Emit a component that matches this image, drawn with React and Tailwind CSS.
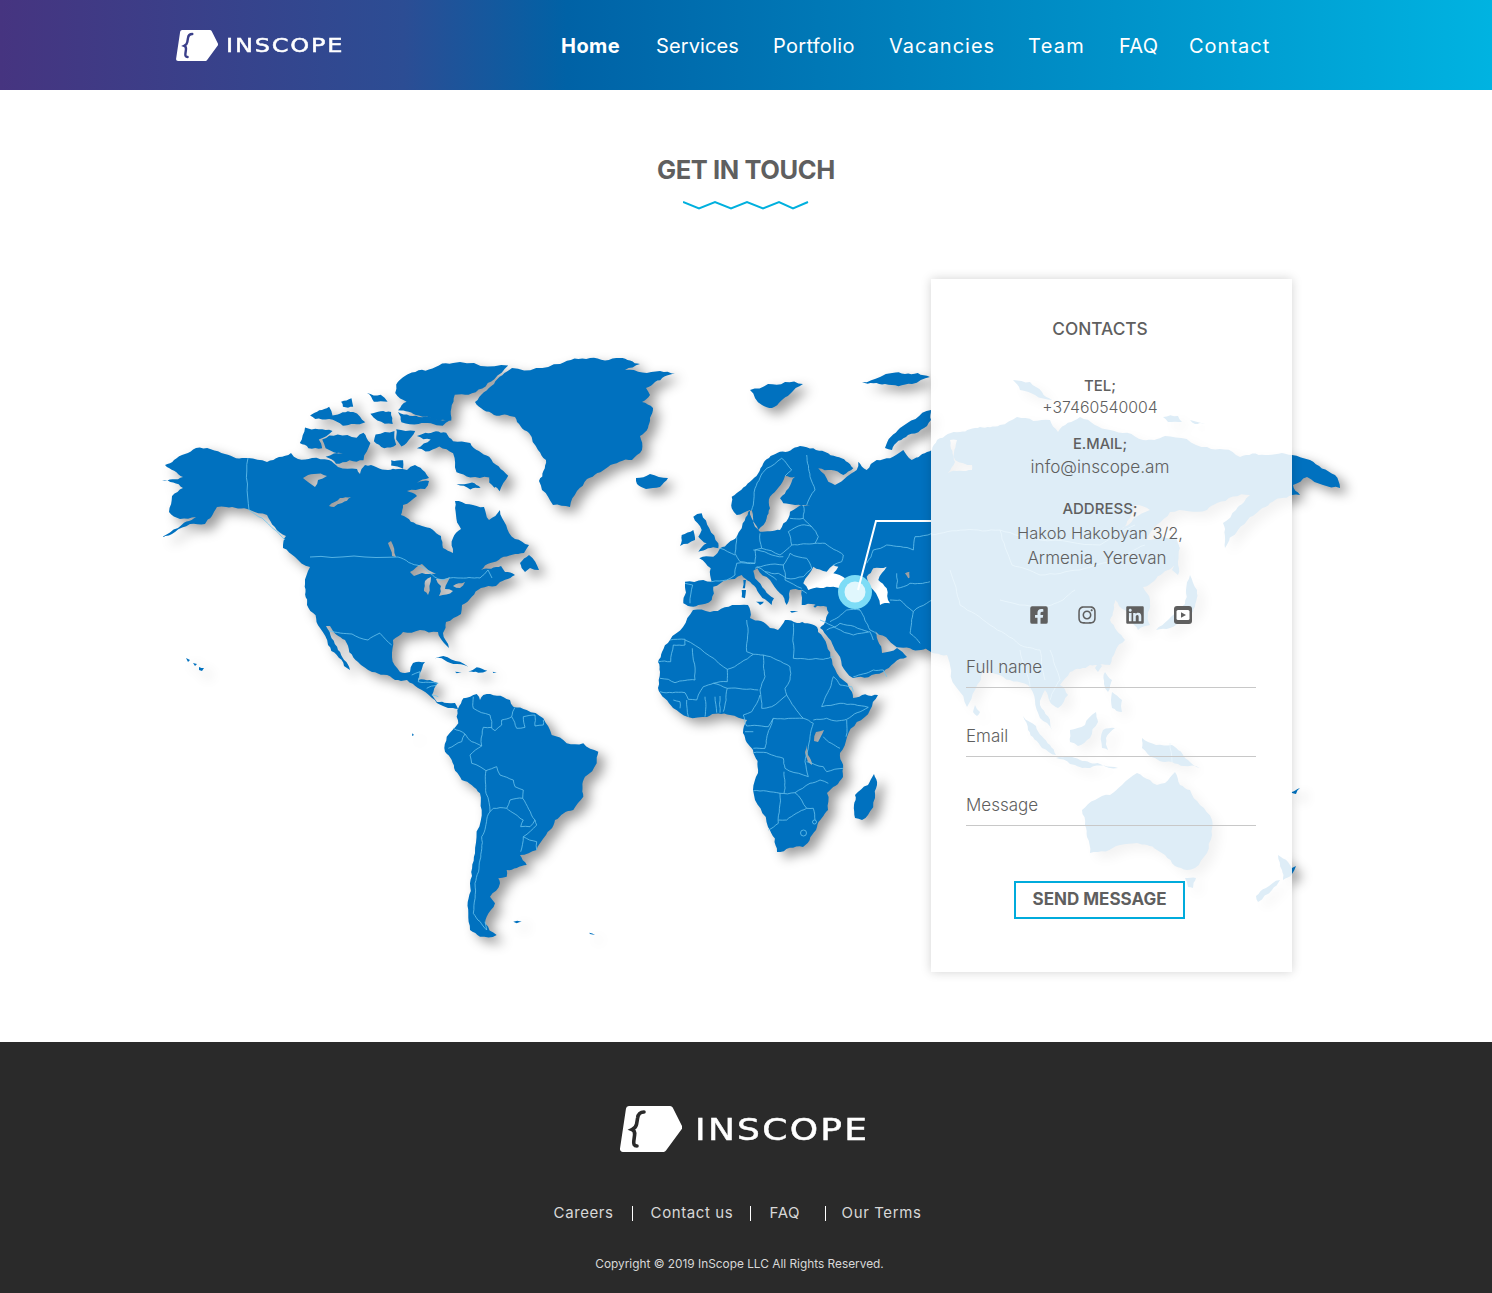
import React from "react";
import { FaFacebookSquare, FaInstagram, FaLinkedin } from "react-icons/fa";

const navLinks = [
  { label: "Home", cls: "font-bold w-[95px] tracking-[0.45px]" },
  { label: "Services", cls: "w-[117px] tracking-[0.1px]" },
  { label: "Portfolio", cls: "w-[116px] tracking-[0.3px]" },
  { label: "Vacancies", cls: "w-[140px] tracking-[1px]" },
  { label: "Team", cls: "w-[91px] tracking-[1.3px] -ml-[1px]" },
  { label: "FAQ", cls: "w-[70px] tracking-[0.3px]" },
  { label: "Contact", cls: "w-[82px] tracking-[1px]" },
];

// land shapes in page coordinates
const landPage = [
  // north america
  "M162,537 L178,528 L196,517 L180,519 L169,512 L172,496 L183,488 L162,481 L183,477 L165,465 L174,460 L196,448 L225,454 L248,458 L267,462 L279,457 L291,453 L298,459 L312,458 L329,460 L338,467 L357,469 L360,474 L365,465 L388,470 L398,469 L407,470 L415,465 L425,472 L429,478 L417,483 L429,481 L425,489 L407,491 L417,496 L403,505 L401,515 L422,526 L441,536 L443,548 L453,553 L453,538 L461,529 L456,515 L455,501 L484,507 L489,520 L500,510 L515,539 L529,545 L524,553 L501,558 L481,570 L501,566 L505,572 L515,575 L496,586 L481,588 L462,605 L461,614 L446,622 L443,633 L449,648 L444,643 L438,632 L420,630 L403,632 L393,640 L392,657 L400,672 L410,672 L413,663 L425,662 L420,673 L418,680 L430,680 L438,683 L432,695 L437,702 L447,703 L455,703 L458,709 L453,708 L448,708 L443,706 L432,698 L418,688 L407,680 L395,680 L372,672 L358,662 L345,640 L330,626 L326,626 L338,650 L350,670 L344,666 L328,645 L320,628 L307,605 L305,584 L310,567 L295,557 L283,548 L286,536 L267,515 L250,510 L226,507 L217,507 L205,524 L190,524 L175,532 Z M303,478 L314,474 L327,476 L318,480 L315,487 L308,482 Z M329,506 L340,498 L351,497 L342,503 L334,507 Z M388,543 L391,541 L396,557 L392,556 Z M410,572 L422,564 L436,574 L422,573 L414,576 Z M425,581 L431,577 L428,595 L424,591 Z M436,579 L450,577 L445,589 L453,591 L439,596 L441,586 Z M453,586 L465,582 L460,588 Z",
  "M520,563 L529,555 L539,570 L530,568 L525,572 Z",
  // greenland
  "M512,368 L560,364 L590,358 L620,358 L640,364 L625,370 L660,371 L675,374 L655,382 L646,388 L650,395 L642,402 L653,408 L650,418 L648,428 L640,436 L642,450 L632,460 L608,467 L587,479 L577,491 L570,507 L553,505 L542,490 L539,481 L546,460 L538,450 L529,433 L515,417 L494,415 L475,402 L494,384 Z",
  // asia, north coast then south coast
  "M915,462 L932,450 L937,440 L960,432 L980,427 L1000,425 L1017,417 L1050,420 L1058,432 L1080,417 L1110,430 L1143,440 L1165,436 L1207,447 L1240,457 L1265,455 L1292,455 L1310,460 L1335,475 L1340,488 L1323,485 L1307,477 L1293,485 L1300,495 L1292,495 L1270,503 L1250,517 L1238,530 L1225,548 L1223,523 L1236,510 L1250,495 L1217,503 L1207,510 L1170,512 L1147,540 L1163,537 L1177,537 L1178,560 L1163,573 L1143,587 L1150,600 L1150,625 L1138,630 L1125,610 L1115,600 L1110,620 L1125,640 L1110,665 L1090,665 L1070,672 L1060,685 L1068,695 L1058,708 L1050,702 L1045,690 L1040,705 L1052,730 L1040,718 L1035,700 L1028,685 L1000,675 L985,668 L975,690 L967,707 L950,665 L947,655 L925,648 L915,640 Z M950,440 L957,440 L955,460 L972,465 L972,470 L948,473 L955,462 Z M1135,505 L1150,510 L1120,530 L1130,518 Z",
  // arabia
  "M830,610 L870,625 L875,628 L882,653 L897,648 L907,657 L883,672 L853,678 L835,650 L820,628 Z",
  // africa
  "M658,662 L662,652 L670,640 L683,627 L693,610 L710,612 L740,605 L748,605 L750,618 L770,628 L778,630 L785,620 L797,623 L817,627 L818,632 L832,660 L852,692 L853,698 L878,695 L870,710 L847,737 L840,753 L843,777 L827,793 L828,810 L817,827 L803,847 L777,852 L768,827 L753,790 L758,773 L753,750 L743,733 L747,720 L730,715 L707,717 L688,717 L673,708 L658,688 L660,672 Z M816,732 L824,730 L818,742 L814,741 Z M806,745 L808,755 L812,765 L808,762 L805,752 Z",
  // europe bits, asia islands, pacific
  "M636,478 L650,474 L668,478 L660,487 L646,489 L637,484 Z",
  "M750,390 L768,384 L785,382 L803,384 L790,394 L772,408 L762,405 Z",
  "M862,382 L880,377 L905,374 L930,377 L912,384 L885,384 Z",
  "M885,448 L900,428 L931,410 L931,420 L908,435 L892,450 Z",
  "M1013,380 L1030,382 L1042,392 L1052,400 L1035,395 L1020,390 Z",
  "M1163,417 L1178,416 L1182,422 L1168,422 Z",
  "M1190,420 L1205,423 L1195,424 Z",
  "M1172,540 L1180,548 L1178,575 L1172,570 L1175,555 Z",
  "M1190,575 L1197,590 L1193,612 L1170,628 L1156,630 L1168,620 L1185,604 L1186,590 Z",
  "M1098,662 L1102,666 L1098,672 L1095,668 Z",
  "M1105,672 L1112,680 L1108,692 L1104,684 Z",
  "M1112,692 L1122,700 L1122,712 L1112,708 Z",
  "M975,705 L980,712 L977,716 L973,712 Z",
  "M1023,716 L1036,726 L1050,745 L1056,755 L1042,748 L1028,730 Z",
  "M1056,758 L1080,760 L1100,764 L1118,768 L1090,768 L1070,764 Z",
  "M1070,730 L1085,725 L1096,712 L1098,722 L1090,738 L1078,746 L1070,742 Z",
  "M1103,730 L1115,728 L1106,738 L1108,750 L1102,748 Z",
  "M1142,738 L1156,745 L1172,745 L1188,760 L1200,768 L1184,766 L1172,762 L1165,762 L1155,758 L1142,748 Z",
  "M1082,810 L1095,800 L1110,795 L1122,785 L1137,773 L1150,780 L1157,785 L1165,783 L1175,772 L1180,785 L1190,790 L1200,805 L1212,820 L1212,835 L1207,853 L1195,868 L1187,870 L1175,866 L1165,855 L1157,850 L1147,845 L1137,843 L1120,845 L1090,853 L1087,837 L1085,825 Z",
  "M1185,878 L1196,878 L1193,888 L1188,887 Z",
  "M1278,855 L1288,862 L1292,868 L1296,866 L1292,874 L1283,880 L1282,870 Z",
  "M1280,880 L1272,890 L1258,902 L1256,896 L1266,888 Z",
  "M1290,792 L1300,788 L1296,794 Z",
  "M855,795 L868,785 L874,774 L877,785 L875,798 L868,815 L862,820 L855,818 L854,805 Z",
  "M186,658 L190,660 L188,662 Z",
  "M193,663 L197,664 L195,666 Z",
  "M199,667 L204,668 L202,671 L199,670 Z",
];

// arctic canada, coordinates read at 2.9x from (150,350)
const landArctic = [
  "M715,100 L760,65 L800,60 L880,38 L1040,45 L1000,85 L925,130 L885,130 L875,170 L875,205 L780,190 L720,175 L745,150 L712,125 Z",
  "M775,250 L800,240 L860,240 L880,265 L930,270 L985,310 L1040,365 L1015,410 L1000,395 L985,370 L930,370 L890,355 L880,300 L840,280 L800,295 L775,285 L815,260 Z",
  "M435,270 L450,225 L530,235 L490,260 L500,285 L460,285 Z",
  "M500,260 L545,245 L600,255 L620,240 L640,270 L620,320 L540,330 L510,310 L560,300 L510,285 Z",
  "M655,245 L710,235 L715,275 L680,285 L650,265 Z",
  "M700,320 L735,320 L735,345 L700,335 Z",
  "M720,180 L790,195 L870,205 L850,220 L780,215 L730,210 Z",
  "M465,190 L520,165 L530,190 L590,180 L625,210 L560,220 L520,200 L480,200 Z",
  "M630,125 L670,130 L690,150 L650,150 Z",
  "M555,150 L585,140 L590,165 L560,165 Z",
  "M640,185 L700,180 L705,215 L660,205 Z",
  "M715,230 L770,235 L745,270 L730,280 L715,260 Z",
  "M890,390 L935,385 L960,400 L930,405 Z",
  "M985,370 L1015,390 L1000,400 L985,385 Z",
];

// europe and the near east, coordinates read at 3x from (670,440)
const landEurope = [
  "M40,490 L45,425 L100,420 L125,425 L122,385 L88,355 L130,350 L150,325 L200,290 L215,265 L218,250 L235,215 L245,210 L255,260 L270,275 L330,270 L355,235 L360,215 L400,195 L420,195 L375,195 L340,190 L330,175 L375,110 L345,108 L300,170 L300,205 L290,235 L265,270 L245,235 L240,210 L200,225 L185,205 L185,170 L240,125 L280,70 L330,35 L390,18 L430,25 L500,50 L550,85 L520,105 L445,85 L475,125 L495,135 L530,110 L560,90 L565,65 L590,90 L620,60 L660,55 L700,30 L725,60 L786,45 L786,625 L720,625 L680,622 L610,570 L600,575 L480,540 L470,500 L395,495 L395,450 L360,450 L350,495 L330,460 L300,420 L262,385 L250,392 L255,415 L285,450 L312,475 L305,495 L285,478 L240,425 L215,405 L170,420 L130,440 L125,480 L85,495 L70,500 Z M705,400 L720,395 L725,410 L715,415 Z",
  "M70,230 L95,220 L118,265 L145,310 L145,325 L85,335 L110,310 L85,290 L95,270 Z",
  "M35,285 L70,270 L75,300 L30,318 Z",
  "M220,420 L228,420 L225,445 L218,445 Z",
  "M215,450 L228,450 L225,475 L215,472 Z",
  "M258,485 L282,485 L270,495 Z",
  "M360,513 L385,515 L365,518 Z",
  "M430,498 L445,495 L435,503 Z",
];

// black sea and caspian, painted over the land
const seas = [
  "M400,430 L430,380 L470,395 L490,375 L505,380 L490,400 L525,415 L510,445 L470,440 L430,445 L415,450 Z",
  "M590,410 L610,385 L650,380 L625,420 L650,445 L660,490 L630,495 L610,450 Z",
];

// south america and the caribbean, coordinates read at 3x from (380,620)
const landSouth = [
  "M235,265 L250,235 L290,222 L300,240 L310,225 L390,240 L400,260 L440,270 L490,295 L515,345 L560,370 L610,370 L655,395 L650,430 L615,470 L610,530 L580,570 L525,600 L510,630 L470,690 L420,705 L440,735 L380,750 L380,770 L355,775 L360,790 L330,830 L345,850 L320,890 L315,910 L350,945 L300,950 L270,930 L265,880 L270,790 L285,700 L305,570 L300,520 L245,480 L215,420 L195,395 L200,350 L235,310 L232,270 Z",
  "M165,115 L190,108 L240,125 L265,140 L220,132 L185,115 Z",
  "M265,155 L290,142 L322,152 L295,158 Z",
  "M225,155 L245,158 L230,160 Z",
  "M338,155 L350,158 L340,159 Z",
  "M400,905 L412,902 L425,905 L410,910 Z",
  "M628,938 L645,945 L630,942 Z",
  "M97,340 L102,345 L96,348 Z",
];

const africaBorders =
  "M135,60 L250,140 L262,148 L340,103 L370,105 L450,140 M55,125 L92,125 L100,75 L135,75 L135,58 L90,60 M157,85 L165,180 L105,188 L85,178 L60,175 M262,148 L262,185 L220,190 L190,200 L175,225 L170,240 L145,238 L135,218 L60,215 M320,0 L320,95 L340,103 M460,10 L460,115 L550,118 L580,110 M450,140 L450,180 L435,205 L440,225 L395,260 L365,265 L360,210 L375,170 L370,105 M440,225 L490,295 L400,295 L380,355 L375,385 L340,385 M262,205 L355,210 M250,275 L262,205 L220,190 M360,225 L335,275 L310,285 L320,318 L365,318 L385,320 L400,295 M340,398 L380,398 L410,410 L430,415 L435,445 L490,465 L505,470 L495,425 L510,350 L520,310 L490,295 M340,512 L420,520 L465,518 L510,490 L540,480 L565,490 M420,520 L415,610 L385,630 M432,520 L432,455 M465,518 L500,565 L520,565 L525,600 M415,600 L440,600 L500,565 M520,300 L560,295 L590,303 L620,298 L685,262 L600,250 L545,260 L570,205 L580,170 L600,195 L635,200 L640,215 M620,300 L618,350 M550,350 L600,385 M500,425 L550,440 L560,455 L610,445 M195,230 L195,290 M225,230 L230,278 M240,228 L240,278 M100,240 L120,245 L120,265 M140,240 L145,290 M640,170 L700,150 L730,150 L740,170 M315,335 L340,335 M540,0 L640,45 L690,35 L700,60";

const europeBorders =
  "M335,55 L290,85 L255,145 L250,195 L245,210 M335,55 L365,90 L345,108 M410,45 L420,110 L435,150 L410,195 M400,195 L400,235 L425,260 M360,235 L400,235 M355,275 L395,255 L425,260 L445,290 L435,310 M270,280 L275,325 L330,345 L365,315 L355,275 M365,315 L435,310 L465,310 L520,345 L515,365 L490,375 M200,290 L195,340 L210,365 L255,370 L255,330 L275,325 M150,325 L195,345 M125,425 L170,420 L195,405 L200,370 M45,430 L68,435 L60,490 M255,385 L290,375 L340,375 L360,340 L410,355 L425,385 L400,410 L350,415 L325,400 L285,395 L260,380 M250,330 L340,350 M345,420 L395,445 M395,450 L410,460 M525,415 L560,430 L590,450 M590,370 L610,330 L650,315 L730,330 L735,290 L786,280 M660,480 L690,480 L730,515 L770,490 L786,480 M680,400 L680,445 L720,430 L780,425 M730,515 L720,580 L750,610 M530,490 L570,510 L600,570 L625,585 M480,545 L530,510 L570,510 M470,570 L510,550 L595,575 M200,370 L255,370 M285,395 L320,420 M340,375 L345,420";

const southBorders =
  "M280,230 L280,265 L330,285 L335,325 L345,332 L365,315 L365,300 L395,290 L405,262 M395,290 L410,325 L435,322 L430,290 L465,285 L465,318 L490,315 L490,300 M310,322 L335,322 M220,325 L255,342 L275,365 L305,378 L303,365 L310,322 M255,342 L245,365 L205,385 M305,378 L270,405 L275,430 L300,440 L318,452 L350,440 L360,465 L400,480 L405,500 L430,510 L428,535 L390,540 L380,565 L340,565 L330,575 L318,520 L318,452 M380,565 L430,600 L422,620 L450,620 L465,600 L428,535 M465,600 L470,615 L430,650 L422,695 M430,650 L470,665 L470,690 M330,575 L322,590 L305,650 L300,720 L285,790 L280,880 L320,930 L315,905 M95,165 L120,155 L115,185 M115,185 L175,190 M140,205 L170,195 M155,225 L175,230 M0,40 L35,75";

const pageBorders =
  "M248,458 L249,510 L262,518 L275,530 L285,540 M310,557 L398,557 L420,566 L440,580 L458,578 L480,578 L488,570 L492,578 M329,631 L352,634 L368,640 L380,633 M1000,530 L1040,540 L1100,545 L1135,525 M931,535 L965,530 L1000,530 L1012,565 L1040,575 L1080,570 L1115,560 L1145,545 M950,570 L960,605 L990,625 L1020,645 L1040,650 M1000,600 L1040,608 L1063,600 L1075,590 M1050,650 L1060,680 L1050,700 M1020,650 L1030,690 M1040,650 L1045,680 M1170,743 L1172,762";

// shake a polyline a little so the coast does not look faceted
let seed = 7;
const rnd = () => {
  seed = (seed * 9301 + 49297) % 233280;
  return seed / 233280 - 0.5;
};

const split = (a, b, depth, amount, cap) => {
  const len = Math.hypot(b[0] - a[0], b[1] - a[1]);
  if (depth === 0 || len < 5) return [b];
  const off = Math.max(-cap, Math.min(cap, rnd() * len * amount));
  const mid = [
    (a[0] + b[0]) / 2 - ((b[1] - a[1]) / len) * off,
    (a[1] + b[1]) / 2 + ((b[0] - a[0]) / len) * off,
  ];
  return [...split(a, mid, depth - 1, amount, cap), ...split(mid, b, depth - 1, amount, cap)];
};

const rough = (d, { ox = 0, oy = 0, s = 1, amount = 0.22, cap = 2.6 } = {}) =>
  d
    .split(/(?=M)/)
    .map((sub) => {
      const nums = sub.match(/-?[\d.]+/g).map(Number);
      const pts = [];
      for (let i = 0; i < nums.length; i += 2) pts.push([ox + nums[i] * s, oy + nums[i + 1] * s]);
      const closed = sub.includes("Z");
      if (closed) pts.push(pts[0]);
      let out = [pts[0]];
      for (let i = 1; i < pts.length; i++) out = out.concat(split(pts[i - 1], pts[i], 3, amount, cap));
      return "M" + out.map((p) => `${p[0].toFixed(1)},${p[1].toFixed(1)}`).join(" L") + (closed ? " Z" : "");
    })
    .join(" ");

const landPaths = [
  ...landPage.map((d) => rough(d)),
  ...landArctic.map((d) => rough(d, { ox: 150, oy: 350, s: 0.3444, cap: 1.6 })),
  ...landEurope.map((d) => rough(d, { ox: 670, oy: 440, s: 1 / 3, cap: 1.8 })),
  ...landSouth.map((d) => rough(d, { ox: 380, oy: 620, s: 1 / 3, cap: 1.8 })),
];

const seaPaths = seas.map((d) => rough(d, { ox: 670, oy: 440, s: 1 / 3, cap: 1.2 }));

const borderPaths = [
  rough(pageBorders, { amount: 0.12, cap: 1 }),
  rough(africaBorders, { ox: 640, oy: 620, s: 1 / 3, amount: 0.12, cap: 0.9 }),
  rough(europeBorders, { ox: 670, oy: 440, s: 1 / 3, amount: 0.14, cap: 1 }),
  rough(southBorders, { ox: 380, oy: 620, s: 1 / 3, amount: 0.14, cap: 1 }),
];

const Logo = ({ className, braceClass }) => (
  <svg viewBox="0 0 62 46" className={className}>
    <path
      d="M9,0 H50 a3,3 0 0 1 2.7,1.6 L62,20 a3,3 0 0 1 -0.2,3 L46,44.6 a3,3 0 0 1 -2.4,1.4 H3 a3,3 0 0 1 -3,-3.4 L6,2.6 A3,3 0 0 1 9,0 Z"
      fill="#fff"
    />
    <path
      d="M24,6 C19,6 18,9 17.6,12 L16.6,18 C16.2,21 15,22 12,23.5 C14.6,24.5 15,26 14.6,29 L13.8,35 C13.4,38 14,40 17,40"
      fill="none"
      strokeWidth="3.6"
      strokeLinecap="round"
      className={braceClass}
    />
  </svg>
);

const YoutubeBox = ({ className }) => (
  <svg viewBox="0 0 18 18" className={className}>
    <rect width="18" height="18" rx="3" fill="#5f5f5f" />
    <rect x="2.5" y="4" width="13" height="10" rx="1.5" fill="#fff" />
    <path d="M7 6.2 L12 9 L7 11.8 Z" fill="#5f5f5f" />
  </svg>
);

const WorldMap = () => (
  <svg viewBox="0 90 1492 952" className="absolute left-0 top-0 w-[1492px] h-[952px]">
    <defs>
      <linearGradient id="sea" x1="0" y1="0" x2="1" y2="1">
        <stop offset="0" stopColor="#b8b8b8" />
        <stop offset="0.55" stopColor="#ffffff" />
      </linearGradient>
    </defs>
    <g className="drop-shadow-[7px_6px_6px_rgba(0,0,0,0.38)]">
      {landPaths.map((d, i) => (
        <path key={i} d={d} fill="#0071bf" fillRule="evenodd" />
      ))}
    </g>
    {seaPaths.map((d, i) => (
      <path key={i} d={d} fill="url(#sea)" />
    ))}
    {borderPaths.map((d, i) => (
      <path key={i} d={d} fill="none" stroke="#6cc4ee" strokeWidth="0.8" />
    ))}
    <circle cx="803.5" cy="833" r="3" fill="none" stroke="#6cc4ee" strokeWidth="0.8" />
    <circle cx="814.5" cy="822" r="2" fill="none" stroke="#6cc4ee" strokeWidth="0.8" />
    <circle cx="855" cy="592" r="17" fill="#7ddcf6" />
    <circle cx="855" cy="592" r="10.5" fill="#e0f7fd" />
    <path d="M858,590 L876,521 H931" fill="none" stroke="#fff" strokeWidth="2" />
  </svg>
);

const Field = ({ label, className }) => (
  <div className={`border-b border-[#c8c8c8] flex items-end pb-[7px] text-[17px] font-light text-[#5f5f5f] ${className}`}>
    {label}
  </div>
);

const Contacts = () => (
  <div className="w-[361px] h-[693px] bg-white/[0.87] shadow-[0_0_10px_rgba(0,0,0,0.18)] text-[#5f5f5f]">
    <div className="w-[338px] flex flex-col items-center text-center">
      <h3 className="mt-[37px] h-[26px] leading-[26px] text-[17.3px] font-medium">CONTACTS</h3>
      <div className="mt-[33px] leading-[22px] text-[15px] font-medium">TEL;</div>
      <div className="leading-[22px] text-[15.8px] font-light">+37460540004</div>
      <div className="mt-[14px] leading-[22px] text-[14.7px] font-medium">E.MAIL;</div>
      <div className="mt-[1px] leading-[22px] text-[17.2px] font-light">info@inscope.am</div>
      <div className="mt-[19px] leading-[24px] text-[15px] font-medium">ADDRESS;</div>
      <div className="leading-[25px] text-[16.5px] font-light">Hakob Hakobyan 3/2,</div>
      <div className="leading-[25px] text-[17px] font-light -ml-[6px]">Armenia, Yerevan</div>
      <div className="mt-[34px] ml-[22px] flex items-center gap-[28px]">
        <FaFacebookSquare className="w-[20px] h-[20px]" />
        <FaInstagram className="w-[20px] h-[20px]" />
        <FaLinkedin className="w-[20px] h-[20px]" />
        <YoutubeBox className="w-[20px] h-[18px]" />
      </div>
    </div>
    <div className="ml-[35px] w-[290px]">
      <Field label="Full name" className="h-[63px]" />
      <Field label="Email" className="h-[69px]" />
      <Field label="Message" className="h-[69px]" />
    </div>
    <div className="mt-[55px] ml-[83px] w-[171px] h-[38px] border-2 border-[#00abdc] flex items-center justify-center text-[17px] font-bold">
      SEND MESSAGE
    </div>
  </div>
);

const Wordmark = ({ className }) => (
  <span className={`inline-block origin-left scale-x-[1.2] whitespace-nowrap font-['DejaVu_Sans',sans-serif] [-webkit-text-stroke:0.5px_white] ${className}`}>
    INSCOPE
  </span>
);

const App = () => {
  return (
    <div className="w-[1492px] font-['Inter','Liberation_Sans',sans-serif]">
      <header className="h-[90px] flex items-center bg-[linear-gradient(90deg,#463480_0%,#2c4d94_27%,#0062a6_38%,#00b3e1_100%)] text-white">
        <div className="ml-[176px] w-[385px] flex items-center">
          <Logo className="w-[42px] h-[31px]" braceClass="stroke-[#3a3f8a]" />
          <Wordmark className="ml-[8px] text-[20px] tracking-[1.5px]" />
        </div>
        <nav className="flex text-[20px] mt-[2px]">
          {navLinks.map((link) => (
            <a key={link.label} className={link.cls}>
              {link.label}
            </a>
          ))}
        </nav>
      </header>

      <main className="relative h-[952px] bg-white overflow-hidden">
        <WorldMap />
        <div className="relative flex flex-col items-center pt-[63px]">
          <h1 className="text-[25.5px] leading-[34px] font-bold text-[#5f5f5f] tracking-[-0.4px]">GET IN TOUCH</h1>
          <svg viewBox="0 0 126 10" className="w-[126px] h-[10px] mt-[13px]">
            <path d="M0,2 L16,8.5 L32,2 L48,8.5 L64,2 L80,8.5 L96,2 L110,8.5 L125,2" fill="none" stroke="#00b0de" strokeWidth="2" />
          </svg>
        </div>
        <div className="relative flex justify-end pr-[200px] mt-[69px]">
          <Contacts />
        </div>
      </main>

      <footer className="h-[251px] bg-[#2a2a2a] flex flex-col items-center text-white">
        <div className="mt-[64px] w-[247px] -ml-[5px] flex items-center">
          <Logo className="w-[62px] h-[46px]" braceClass="stroke-[#2a2a2a]" />
          <Wordmark className="ml-[13px] text-[30px] tracking-[1.9px]" />
        </div>
        <div className="mt-[50px] flex items-center text-[15px] text-[#d8d8d8] tracking-[0.6px] -ml-[17px]">
          <span className="w-[78px]">Careers</span>
          <span className="h-[15px] w-px bg-white" />
          <span className="pl-[18px] w-[117px]">Contact us</span>
          <span className="h-[15px] w-px bg-white" />
          <span className="pl-[19px] w-[74px]">FAQ</span>
          <span className="h-[15px] w-px bg-white" />
          <span className="pl-[16px]">Our Terms</span>
        </div>
        <p className="mt-[31px] text-[11.85px] text-[#d8d8d8] -ml-[13px]">Copyright © 2019 InScope LLC All Rights Reserved.</p>
      </footer>
    </div>
  );
};

export default App;
